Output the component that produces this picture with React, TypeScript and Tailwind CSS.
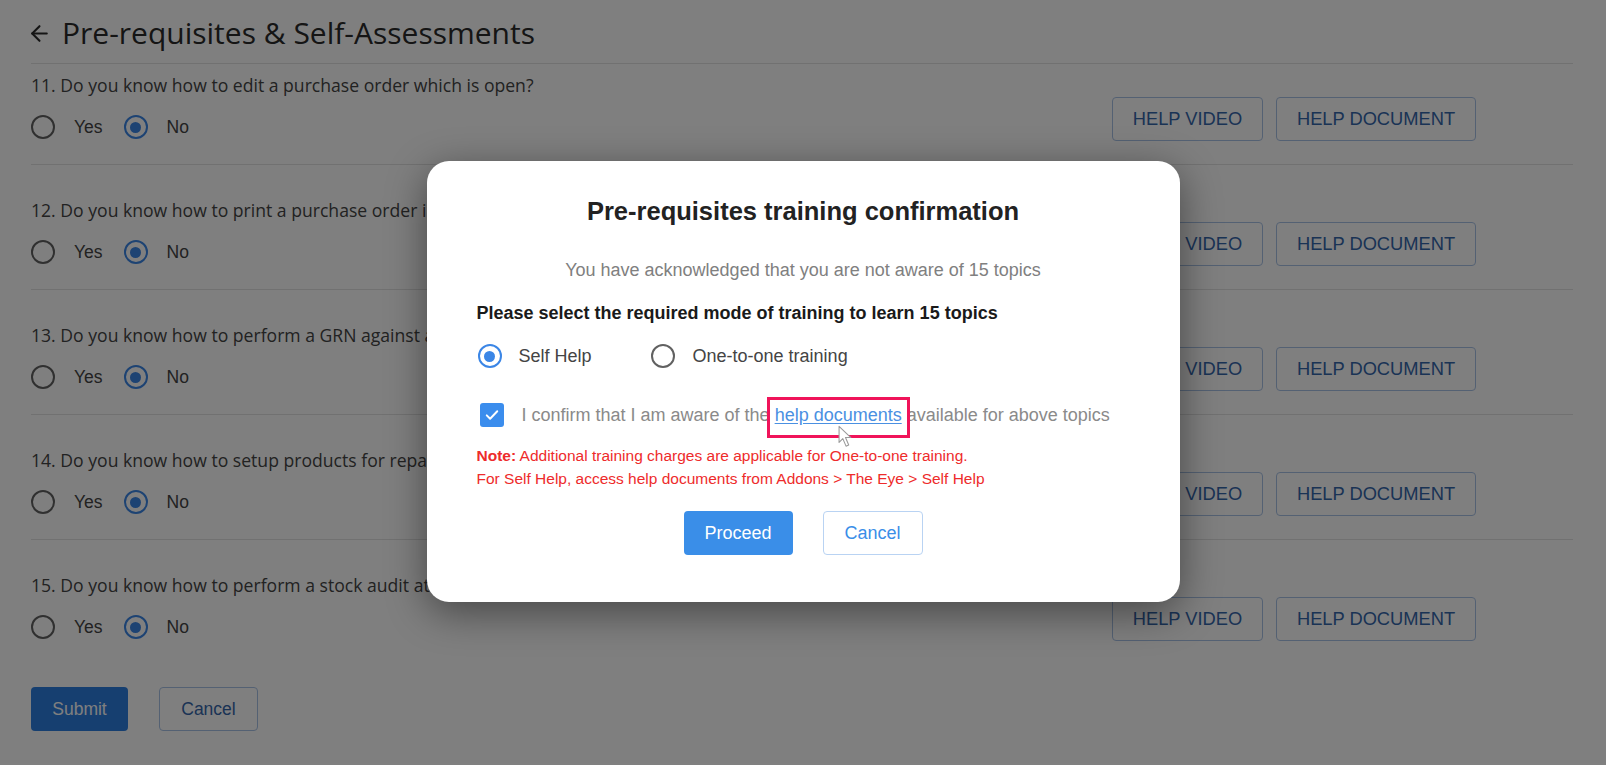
import React from 'react';
import { ArrowLeft } from 'lucide-react';

const questions = [
  '11. Do you know how to edit a purchase order which is open?',
  '12. Do you know how to print a purchase order in a custom format?',
  '13. Do you know how to perform a GRN against a purchase order?',
  '14. Do you know how to setup products for repair services?',
  '15. Do you know how to perform a stock audit at the store?',
];

const Radio: React.FC<{ checked?: boolean }> = ({ checked }) =>
  checked ? (
    <span className="flex h-[24px] w-[24px] shrink-0 items-center justify-center rounded-full border-[2.5px] border-[#3b86e6]">
      <span className="h-[11px] w-[11px] rounded-full bg-[#3b86e6]" />
    </span>
  ) : (
    <span className="block h-[24px] w-[24px] shrink-0 rounded-full border-2 border-[#616161]" />
  );

const QuestionRow: React.FC<{ text: string; first?: boolean; last?: boolean }> = ({ text, first, last }) => (
  <div
    className={`flex items-end justify-between ${first ? 'pt-[9px]' : 'pt-[33px]'} ${
      last ? '' : 'pb-[25px] border-b border-[#e2e2e2]'
    }`}
  >
    <div>
      <div className="font-['Open_Sans',sans-serif] text-[17.6px] leading-[24px] text-[#444444]">{text}</div>
      <div className="mt-[18px] flex h-[24px] items-center font-['Liberation_Sans',Arial,sans-serif] text-[17.5px] text-[#444444]">
        <Radio />
        <span className="ml-[19px]">Yes</span>
        <span className="ml-[21px]">
          <Radio checked />
        </span>
        <span className="ml-[19px]">No</span>
      </div>
    </div>
    <div className="mr-[97px] -mb-[2px] flex gap-[13px] font-['Liberation_Sans',Arial,sans-serif] text-[18.3px] text-[#3566ab]">
      <button className="h-[44px] w-[151px] rounded-[4px] border border-[#a9c3e6] bg-white">HELP VIDEO</button>
      <button className="h-[44px] w-[200px] rounded-[4px] border border-[#a9c3e6] bg-white">HELP DOCUMENT</button>
    </div>
  </div>
);

const App: React.FC = () => {
  return (
    <div className="relative h-[765px] w-full overflow-hidden bg-white">
      <div className="pl-[31px] pr-[33px]">
        <div className="flex h-[64px] items-center gap-[10px] border-b border-[#e2e2e2] pt-[3px] text-[#2a2a2a]">
          <ArrowLeft className="-ml-[4px] h-[25px] w-[25px]" strokeWidth={2} />
          <h1 className="font-['Open_Sans',sans-serif] text-[30px] leading-none">
            Pre-requisites &amp; Self-Assessments
          </h1>
        </div>
        {questions.map((q, i) => (
          <QuestionRow key={q} text={q} first={i === 0} last={i === questions.length - 1} />
        ))}
        <div className="mt-[48px] flex gap-[31px] font-['Liberation_Sans',Arial,sans-serif] text-[17.5px]">
          <button className="h-[44px] w-[97px] rounded-[4px] bg-[#2d7fe0] text-white">Submit</button>
          <button className="h-[44px] w-[99px] rounded-[4px] border border-[#a9c3e6] bg-white text-[#3566ab]">
            Cancel
          </button>
        </div>
      </div>

      <div className="absolute inset-0 flex justify-center bg-black/50">
        <div className="relative mt-[161px] h-[441px] w-[753px] rounded-[22px] bg-white px-[50px] pt-[36px] font-['Liberation_Sans',Arial,sans-serif] shadow-[0_10px_40px_rgba(0,0,0,0.45)]">
          <h2 className="text-center text-[25.5px] font-bold leading-[28px] text-[#222222]">
            Pre-requisites training confirmation
          </h2>
          <p className="mt-[34px] text-center text-[18px] leading-[22px] text-[#808080]">
            You have acknowledged that you are not aware of 15 topics
          </p>
          <p className="mt-[21px] text-[18px] font-bold leading-[22px] text-[#1a1a1a]">
            Please select the required mode of training to learn 15 topics
          </p>
          <div className="ml-[1px] mt-[20px] flex h-[24px] items-center text-[18px] text-[#444444]">
            <Radio checked />
            <span className="ml-[17px]">Self Help</span>
            <span className="ml-[59px]">
              <Radio />
            </span>
            <span className="ml-[18px]">One-to-one training</span>
          </div>
          <div className="ml-[3px] mt-[35px] flex h-[24px] items-center text-[18px] text-[#8a8a8a]">
            <span className="flex h-[24px] w-[24px] shrink-0 items-center justify-center rounded-[3px] bg-[#3b8ded]">
              <svg viewBox="0 0 24 24" className="h-[18px] w-[18px]" fill="none" stroke="white" strokeWidth={2.6} strokeLinecap="round" strokeLinejoin="round">
                <path d="M5 12.5l4.5 4.5L19 7" />
              </svg>
            </span>
            <span className="ml-[18px] whitespace-nowrap">
              I confirm that I am aware of the{' '}
              <span className="relative text-[#4a90e2] underline underline-offset-2">
                help documents
                <span className="pointer-events-none absolute -bottom-[13px] -left-[8px] -right-[8px] -top-[8px] border-[3px] border-[#f0145a]" />
              </span>{' '}
              available for above topics
            </span>
          </div>
          <div className="mt-[17px] text-[15.5px] leading-[23px] text-[#ee2b2b]">
            <p>
              <b>Note:</b> Additional training charges are applicable for One-to-one training.
            </p>
            <p>For Self Help, access help documents from Addons &gt; The Eye &gt; Self Help</p>
          </div>
          <div className="mt-[21px] flex justify-center gap-[30px] text-[18px]">
            <button className="h-[44px] w-[109px] rounded-[4px] bg-[#3a8ee8] text-white">Proceed</button>
            <button className="h-[44px] w-[100px] rounded-[4px] border border-[#b9d3f3] bg-white text-[#3a8ee8]">
              Cancel
            </button>
          </div>
          <svg className="absolute left-[411px] top-[264px] h-[23px] w-[15px]" viewBox="0 0 14 21">
            <path d="M1 1 L1 16 L4.5 12.5 L7.5 19.5 L10 18.5 L7 11.5 L12 11.5 Z" fill="white" stroke="#9a9a9a" strokeWidth={1} strokeLinejoin="round" />
          </svg>
        </div>
      </div>
    </div>
  );
};

export default App;
